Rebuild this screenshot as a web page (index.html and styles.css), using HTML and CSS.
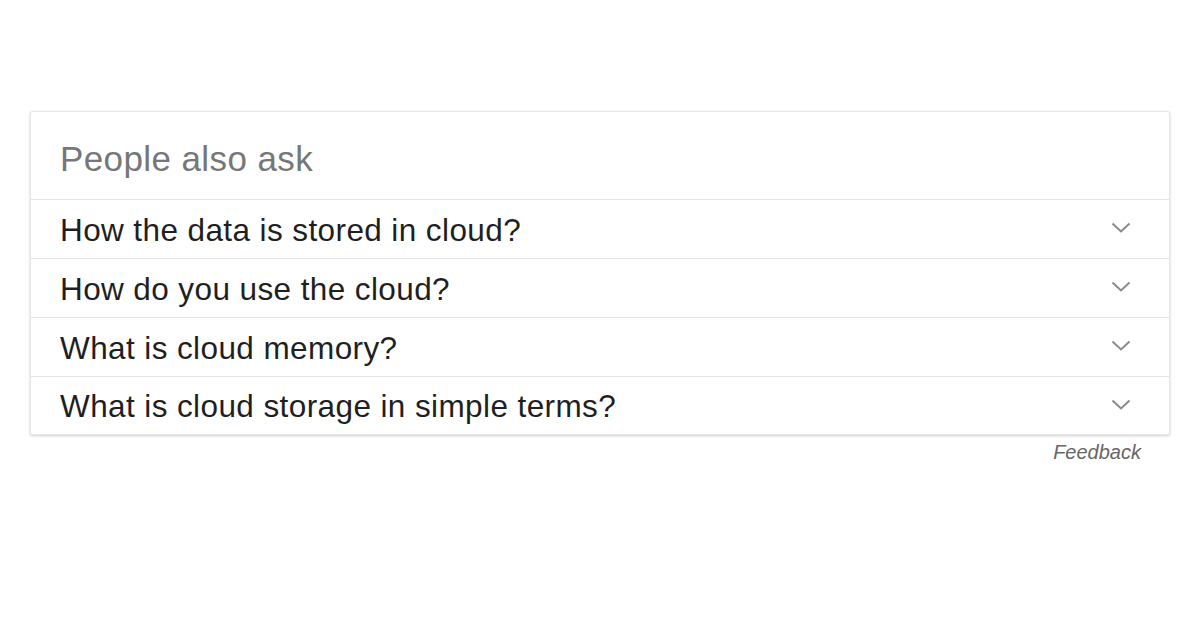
FILE: index.html
```html
<!DOCTYPE html>
<html>
<head>
<meta charset="utf-8">
<link rel="stylesheet" href="styles.css">
</head>
<body>
<div class="wrap">
  <div class="card">
    <div class="head">People also ask</div>
    <div class="row"><span class="q">How the data is stored in cloud?</span><svg class="chev" viewBox="0 0 20 12"><path d="M1.5 1.5 L10 9.5 L18.5 1.5" /></svg></div>
    <div class="row"><span class="q">How do you use the cloud?</span><svg class="chev" viewBox="0 0 20 12"><path d="M1.5 1.5 L10 9.5 L18.5 1.5" /></svg></div>
    <div class="row"><span class="q">What is cloud memory?</span><svg class="chev" viewBox="0 0 20 12"><path d="M1.5 1.5 L10 9.5 L18.5 1.5" /></svg></div>
    <div class="row"><span class="q">What is cloud storage in simple terms?</span><svg class="chev" viewBox="0 0 20 12"><path d="M1.5 1.5 L10 9.5 L18.5 1.5" /></svg></div>
  </div>
  <div class="feedback">Feedback</div>
</div>
</body>
</html>
```
FILE: styles.css
```css
html, body {
  margin: 0;
  padding: 0;
  background: #fff;
  font-family: "Liberation Sans", Arial, sans-serif;
}
.wrap {
  padding: 111px 30px 0 30px;
}
.card {
  background: #fff;
  border: 1px solid #e6e6e6;
  box-shadow: 0 1px 3px rgba(0,0,0,0.18);
  border-radius: 2px;
}
.head {
  height: 88px;
  box-sizing: border-box;
  padding: 27px 0 0 29px;
  font-size: 35px;
  letter-spacing: 0.4px;
  color: #777;
  border-bottom: 1px solid #e4e4e4;
  line-height: 40px;
}
.row {
  height: 58px;
  display: flex;
  align-items: center;
  justify-content: space-between;
  padding: 0 38px 0 29px;
  border-bottom: 1px solid #e4e4e4;
}
.row:last-child {
  border-bottom: none;
  height: 57px;
}
.q {
  font-size: 31.5px;
  letter-spacing: 0.4px;
  color: #1f1f1f;
  padding-top: 2px;
}
.chev {
  width: 20px;
  height: 12px;
  fill: none;
  stroke: #8a8a8a;
  stroke-width: 2;
  margin-top: -2px;
}
.feedback {
  text-align: right;
  padding: 6px 29px 0 0;
  font-size: 20px;
  font-style: italic;
  color: #666;
}
```
